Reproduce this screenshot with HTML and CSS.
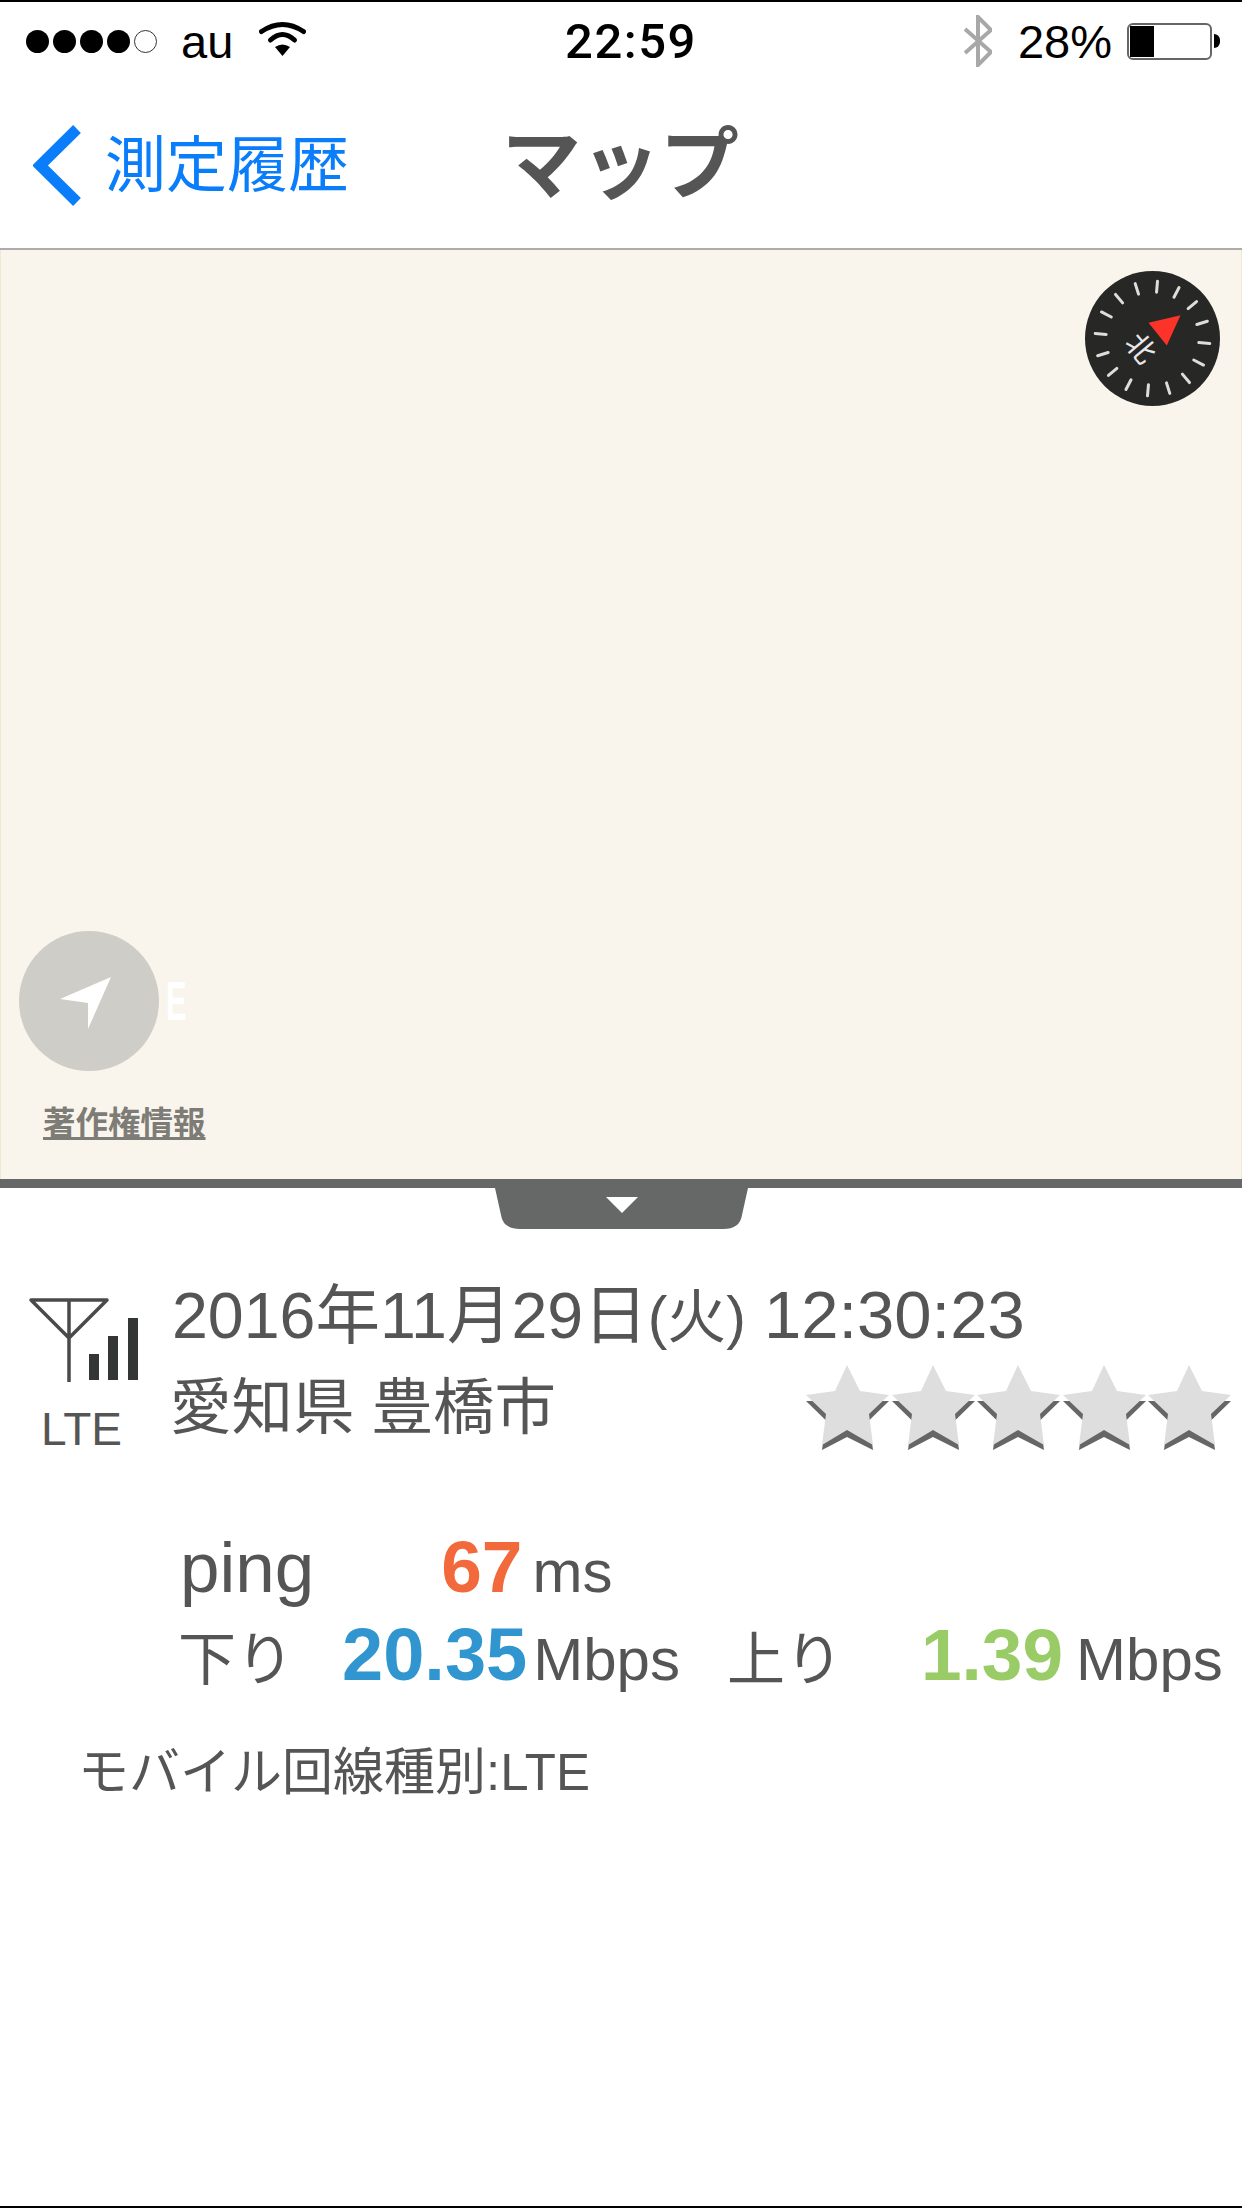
FILE: index.html
```html
<!DOCTYPE html>
<html lang="ja">
<head>
<meta charset="utf-8">
<title>マップ</title>
<link rel="stylesheet" href="styles.css">
</head>
<body>
<div class="screen">
  <header class="status">
    <div class="status-left">
      <div class="signal"><i></i><i></i><i></i><i></i><i class="off"></i></div>
      <span class="carrier">au</span>
      <svg class="wifi" viewBox="0 0 47 35"><path class="wifi-arc" d="M2.500 10.500Q23.500-3.500 44.500 10.500"/><path class="wifi-arc" d="M11.500 19Q23.500 8 35.500 19"/><path d="M16 26Q23.500 21 31 26L23.500 35Z"/></svg>
    </div>
    <div class="time">22:59</div>
    <div class="status-right">
      <svg class="bt" viewBox="0 0 28 52"><path d="M1 14 27 37 14 50V2L27 15 1 38" fill="none" stroke="#a8a8a8" stroke-width="4"/></svg>
      <span class="pct">28%</span>
      <div class="battery"><div class="level"></div></div>
      <div class="nub"></div>
    </div>
  </header>
  <nav class="navbar">
    <a class="back">
      <svg class="chev" viewBox="0 0 49 81"><path d="M44 4 7 40.500 44 77" fill="none" stroke="#0a7dfb" stroke-width="11"/></svg>
      <span>測定履歴</span>
    </a>
    <h1 class="title">マップ</h1>
  </nav>
  <section class="map">
    <div class="compass">
      <svg viewBox="0 0 135 135">
        <circle cx="67.500" cy="67.500" r="67.500" fill="#272725"/>
        <g stroke="#ddd" stroke-width="3" stroke-linecap="round">
          <path d="M67.500 10v11" transform="rotate(5 67.500 67.500)"/>
          <path d="M67.500 10v11" transform="rotate(27.500 67.500 67.500)"/>
          <path d="M67.500 10v11" transform="rotate(50 67.500 67.500)"/>
          <path d="M67.500 10v11" transform="rotate(72.500 67.500 67.500)"/>
          <path d="M67.500 10v11" transform="rotate(95 67.500 67.500)"/>
          <path d="M67.500 10v11" transform="rotate(117.500 67.500 67.500)"/>
          <path d="M67.500 10v11" transform="rotate(140 67.500 67.500)"/>
          <path d="M67.500 10v11" transform="rotate(162.500 67.500 67.500)"/>
          <path d="M67.500 10v11" transform="rotate(185 67.500 67.500)"/>
          <path d="M67.500 10v11" transform="rotate(207.500 67.500 67.500)"/>
          <path d="M67.500 10v11" transform="rotate(230 67.500 67.500)"/>
          <path d="M67.500 10v11" transform="rotate(252.500 67.500 67.500)"/>
          <path d="M67.500 10v11" transform="rotate(275 67.500 67.500)"/>
          <path d="M67.500 10v11" transform="rotate(297.500 67.500 67.500)"/>
          <path d="M67.500 10v11" transform="rotate(320 67.500 67.500)"/>
          <path d="M67.500 10v11" transform="rotate(342.500 67.500 67.500)"/>
        </g>
        <polygon points="63.500,51.800 95.500,44.200 81.800,74.500" fill="#fb3328"/>
        <text class="north" transform="translate(55.500 77.500) rotate(50)" text-anchor="middle" y="10">北</text>
      </svg>
    </div>
    <div class="map-foot">
      <div class="locate-row">
        <div class="locate">
          <svg viewBox="0 0 51 52"><polygon points="0,22 51,0 28,52 28,26" fill="#fff"/></svg>
        </div>
        <span class="map-e">E</span>
      </div>
      <a class="legal">著作権情報</a>
    </div>
  </section>
  <div class="divider"></div>
  <div class="tab"><div class="tri"></div></div>
  <section class="info">
    <div class="net">
      <svg class="antenna" viewBox="0 0 110 90">
        <path d="M2 2H78L40 40ZM40 2V84" fill="none" stroke="#4a4a4a" stroke-width="3.500" stroke-linejoin="round"/>
        <path d="M60 56h10v26H60zM79 38h10v44H79zM99 20h10v62H99z" fill="#333634"/>
      </svg>
      <span class="net-label">LTE</span>
    </div>
    <div class="meta">
      <div class="date">2016年11月29日<span class="dow">(火)</span> <span class="clock">12:30:23</span></div>
      <div class="place-row">
        <span class="place">愛知県 豊橋市</span>
        <div class="stars">
          <svg viewBox="0 0 83 86"><polygon class="s-dark" points="0,36 83,36 63,55.500 67,85 41,72 16,85 20,55.500"/><polygon class="s-light" points="41,0 54,26 83,30 63,49 67,80 41,65 16,80 20,49 0,30 29,26"/></svg>
          <svg viewBox="0 0 83 86"><polygon class="s-dark" points="0,36 83,36 63,55.500 67,85 41,72 16,85 20,55.500"/><polygon class="s-light" points="41,0 54,26 83,30 63,49 67,80 41,65 16,80 20,49 0,30 29,26"/></svg>
          <svg viewBox="0 0 83 86"><polygon class="s-dark" points="0,36 83,36 63,55.500 67,85 41,72 16,85 20,55.500"/><polygon class="s-light" points="41,0 54,26 83,30 63,49 67,80 41,65 16,80 20,49 0,30 29,26"/></svg>
          <svg viewBox="0 0 83 86"><polygon class="s-dark" points="0,36 83,36 63,55.500 67,85 41,72 16,85 20,55.500"/><polygon class="s-light" points="41,0 54,26 83,30 63,49 67,80 41,65 16,80 20,49 0,30 29,26"/></svg>
          <svg viewBox="0 0 83 86"><polygon class="s-dark" points="0,36 83,36 63,55.500 67,85 41,72 16,85 20,55.500"/><polygon class="s-light" points="41,0 54,26 83,30 63,49 67,80 41,65 16,80 20,49 0,30 29,26"/></svg>
        </div>
      </div>
    </div>
  </section>
  <section class="speeds">
    <div class="row">
      <span class="lbl-ping">ping</span>
      <b class="val ping">67</b>
      <span class="unit unit-ms">ms</span>
    </div>
    <div class="row">
      <span class="lbl">下り</span>
      <b class="val down">20.35</b>
      <span class="unit unit-down">Mbps</span>
      <span class="lbl lbl-up">上り</span>
      <b class="val up">1.39</b>
      <span class="unit unit-up">Mbps</span>
    </div>
  </section>
  <p class="mobile">モバイル回線種別:LTE</p>
</div>
</body>
</html>
```
FILE: styles.css
```css
* { box-sizing: border-box; }
html, body { margin: 0; padding: 0; background: #fff; }
body { font-family: "Liberation Sans", "Noto Sans CJK JP", sans-serif; }
.screen { width: 1242px; height: 2208px; overflow: hidden; display: flex; flex-direction: column; background: #fff; border-top: 2px solid #000; border-bottom: 2px solid #000; }

.status { height: 78px; flex: none; display: grid; grid-template-columns: 1fr auto 1fr; align-items: center; color: #000; font-size: 47px; padding: 0 22px 0 26px; }
.status-left { display: flex; align-items: center; }
.signal { display: flex; gap: 4px; }
.signal i { width: 23px; height: 23px; border-radius: 50%; background: #000; }
.signal i.off { background: #fff; border: 1.500px solid #333; }
.carrier { margin-left: 24px; line-height: 1; }
.wifi { width: 47px; height: 35px; margin-left: 26px; margin-top: -6px; }
.wifi-arc { fill: none; stroke: #000; stroke-width: 5; stroke-linecap: round; }
.time { font-family: Roboto, "Liberation Sans", sans-serif; font-weight: 500; font-size: 49px; letter-spacing: 1.500px; line-height: 1; margin-left: 16px; }
.status-right { display: flex; align-items: center; justify-content: flex-end; }
.bt { width: 28px; height: 52px; }
.pct { margin-left: 26px; line-height: 1; }
.battery { width: 85px; height: 37px; margin-left: 15px; border: 2px solid #666; border-radius: 6px; padding: 1px; }
.level { width: 24px; height: 100%; background: #000; }
.nub { width: 6px; height: 14px; background: #000; border-radius: 0 7px 7px 0; margin-left: 2px; }

.navbar { height: 170px; flex: none; display: flex; align-items: center; padding: 2px 0 0 33px; border-bottom: 2px solid #aeaca8; }
.back { display: flex; align-items: center; color: #0a7dfb; font-size: 61px; line-height: 1; }
.chev { width: 49px; height: 81px; }
.back span { margin-left: 23px; margin-top: 2px; }
.title { margin: 0 0 0 153px; font-size: 79px; font-weight: 700; color: #555; line-height: 1; }

.map { height: 929px; flex: none; background: #f9f5ed; border-left: 1px solid #efe9d0; border-right: 1px solid #efe9d0; padding: 21px 21px 0 18px; display: flex; flex-direction: column; justify-content: space-between; }
.compass { width: 135px; height: 135px; align-self: flex-end; }
.compass svg { display: block; }
.north { font-size: 29px; fill: #e8e8e8; }
.map-foot { display: flex; flex-direction: column; padding-bottom: 36px; }
.locate-row { display: flex; align-items: center; }
.locate { width: 140px; height: 140px; border-radius: 50%; background: #cfcdc8; display: flex; align-items: center; justify-content: center; }
.locate svg { width: 51px; height: 52px; margin: 4px 7px 0 0; }
.map-e { color: #fff; font-size: 56px; font-weight: 700; margin-left: 7px; line-height: 1; transform: scaleX(.55); transform-origin: left; }
.legal { margin: 36px 0 0 24px; font-size: 32.500px; font-weight: 700; color: #7d7c77; text-decoration: underline; line-height: 1.1; }

.divider { height: 9px; background: #666867; flex: none; }
.tab { width: 253px; height: 41px; margin: 0 0 0 495px; background: #666867; clip-path: path("M0 0H253L247 27Q245 41 228 41H25Q8 41 6 27Z"); display: flex; justify-content: center; padding-top: 9px; flex: none; }
.tri { width: 0; height: 0; border-left: 16px solid transparent; border-right: 16px solid transparent; border-top: 16px solid #fff; }

.info { display: flex; margin-top: 58px; color: #555; height: 170px; flex: none; }
.net { width: 172px; padding-left: 29px; display: flex; flex-direction: column; }
.antenna { width: 110px; height: 90px; margin-top: 11px; overflow: visible; }
.net-label { font-size: 46px; line-height: 1; margin: 18px 0 0 12px; }
.meta { flex: 1; }
.date { font-size: 64.500px; line-height: 1; margin-top: -6px; white-space: nowrap; }
.dow { font-size: 59px; }
.clock { font-size: 67px; }
.place-row { display: flex; justify-content: space-between; }
.place { font-size: 61.500px; line-height: 1; margin: 28px 0 0 -2px; }
.stars { display: flex; gap: 2.500px; margin: 16px 11px 0 0; }
.stars svg { width: 83px; height: 86px; }
.s-dark { fill: #666; }
.s-light { fill: #dedede; }

.speeds { color: #555; margin: 66px 0 0 180px; }
.row { display: flex; align-items: baseline; white-space: nowrap; height: 88px; line-height: 88px; }
.lbl-ping { font-size: 71px; }
.lbl { font-size: 58px; margin-left: -2px; }
.val { font-size: 73px; }
.unit { font-size: 60px; }
.unit-ms { margin-left: 10px; }
.unit-down { margin-left: 6px; }
.unit-up { margin-left: 13px; }
.ping { color: #f26a3c; margin-left: 127px; }
.down { color: #3196d0; margin-left: 48px; font-size: 74px; }
.up { color: #99cc66; margin-left: 78px; }
.lbl-up { margin-left: 47px; }
.mobile { margin: 48px 0 0 78px; font-size: 51px; color: #555; line-height: 1; }
```
